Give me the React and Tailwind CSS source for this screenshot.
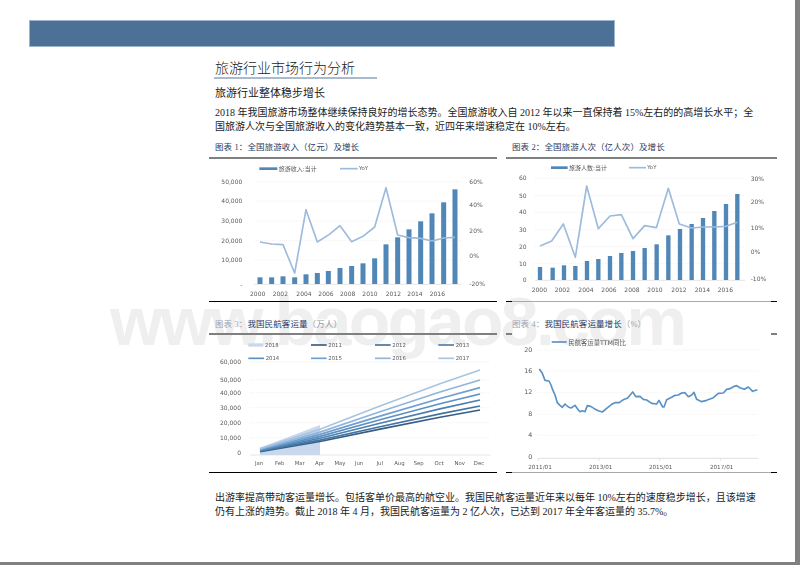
import React from 'react'

const chartFont = "font-['DejaVu_Sans','Noto_Sans_CJK_SC',sans-serif]"
const blue = '#5087b7'
const light = '#9dbbdc'

// chart coordinates below are 3x page pixels, the viewBox scales them down
const toPoints = (pts) => pts.map((p) => p.join(',')).join(' ')

const Grid = ({ x1, x2, ys }) =>
    ys.map((y) => <line key={y} x1={x1} x2={x2} y1={y} y2={y} stroke="#ececec" strokeWidth="2" strokeDasharray="3 3" />)

const Labels = ({ items, x, anchor = 'end', size = 18 }) =>
    items.map(([label, y]) => (
        <text key={label} x={x} y={y + 6} fontSize={size} textAnchor={anchor} fill="#595959">{label}</text>
    ))

const XLabels = ({ items, y, size = 18 }) =>
    items.map(([label, x]) => (
        <text key={label} x={x} y={y + 6} fontSize={size} textAnchor="middle" fill="#595959">{label}</text>
    ))

const BarsChart = ({ box, bars, line, base, barW, grid, left, leftX, right, rightX, xs, xsY, legend }) => (
    <svg viewBox={`${box[0]} 75 ${box[1]} 420`} className={`block w-full h-[140px] mt-px blur-[0.3px] ${chartFont}`}>
        <Grid x1={grid[0]} x2={grid[1]} ys={grid[2]} />
        <line x1={grid[0]} x2={grid[1]} y1={base + 1} y2={base + 1} stroke="#d9d9d9" strokeWidth="2" />
        {bars.map(([x, top]) => <rect key={x} x={x - barW / 2} y={top} width={barW} height={base - top} fill={blue} />)}
        <polyline points={toPoints(line)} fill="none" stroke={light} strokeWidth="5" strokeLinejoin="round" />
        <Labels items={left} x={leftX} />
        <Labels items={right} x={rightX} anchor="start" />
        <XLabels items={xs} y={xsY} />
        <rect x={legend.rect[0]} y={legend.y - 4} width={legend.rect[1]} height="8" fill={blue} />
        <text x={legend.rect[0] + legend.rect[1] + 4} y={legend.y + 6} fontSize="18" fill="#595959">{legend.name}</text>
        <line x1={legend.line[0]} x2={legend.line[0] + legend.line[1]} y1={legend.y} y2={legend.y} stroke={light} strokeWidth="5" />
        <text x={legend.line[0] + legend.line[1] + 4} y={legend.y + 5} fontSize="16" fill="#595959">YoY</text>
    </svg>
)

const chart1 = {
    box: [12, 864],
    base: 447,
    barW: 15,
    bars: [[165, 427], [200, 427], [234, 424], [269, 427], [303, 418], [337, 414], [370, 408], [405, 399], [440, 393], [474, 385], [509, 370], [543, 328], [578, 307], [612, 283], [647, 259], [681, 235], [716, 202], [750, 163]],
    line: [[165, 321], [200, 327], [234, 329], [269, 414], [303, 224], [337, 321], [372, 299], [405, 272], [440, 320], [474, 304], [509, 276], [543, 158], [578, 300], [612, 308], [647, 310], [681, 318], [716, 309], [750, 307]],
    grid: [147, 770, [140, 198, 258, 317, 375]],
    left: [['50,000', 140], ['40,000', 198], ['30,000', 258], ['20,000', 317], ['10,000', 375], ['-', 449]],
    leftX: 112,
    right: [['60%', 141], ['40%', 210], ['20%', 287], ['0%', 362], ['-20%', 447]],
    rightX: 793,
    xs: [['2000', 158], ['2002', 226], ['2004', 297], ['2006', 363], ['2008', 428], ['2010', 495], ['2012', 565], ['2014', 630], ['2016', 697]],
    xsY: 476,
    legend: { y: 101, rect: [163, 54], name: '旅游收入:当计', line: [405, 53] },
}

const chart2 = {
    box: [18, 813],
    base: 435,
    barW: 13,
    bars: [[120, 396], [158, 398], [192, 391], [226, 393], [261, 378], [295, 372], [330, 363], [364, 354], [399, 348], [434, 339], [470, 328], [505, 301], [540, 282], [575, 267], [609, 249], [643, 228], [678, 207], [712, 177]],
    line: [[120, 333], [155, 318], [190, 267], [226, 367], [260, 153], [295, 281], [330, 243], [364, 239], [399, 311], [434, 272], [469, 278], [505, 160], [538, 267], [575, 279], [609, 276], [643, 276], [678, 274], [712, 262]],
    grid: [105, 735, [130, 182, 232, 284, 335, 386]],
    left: [['60', 130], ['50', 182], ['40', 232], ['30', 284], ['20', 335], ['10', 386], ['0', 435]],
    leftX: 80,
    right: [['30%', 131], ['20%', 200], ['10%', 278], ['0%', 352], ['-10%', 433]],
    rightX: 752,
    xs: [['2000', 118], ['2002', 187], ['2004', 258], ['2006', 327], ['2008', 396], ['2010', 465], ['2012', 537], ['2014', 607], ['2016', 676]],
    xsY: 464,
    legend: { y: 98, rect: [153, 50], name: '旅游人数:当计', line: [387, 51] },
}

const series = [
    ['2011', '#355d87', 345, 318, 150],
    ['2012', '#44739f', 333, 510, 150],
    ['2013', '#4c7fae', 315, 700, 150],
    ['2014', '#5b90c3', 297, 130, 190],
    ['2015', '#6e9fd0', 278, 318, 190],
    ['2016', '#90b4da', 255, 510, 190],
    ['2017', '#a9c4e0', 225, 700, 190],
]
const stops = [[165, 0], [345, 0.245], [525, 0.54], [705, 0.825], [825, 1]]
const months = [['Jan', 162], ['Feb', 224], ['Mar', 284], ['Apr', 344], ['May', 405], ['Jun', 462], ['Jul', 524], ['Aug', 583], ['Sep', 641], ['Oct', 702], ['Nov', 764], ['Dec', 822]]

const MonthlyChart = () => (
    <svg viewBox="12 123 864 402" className={`block w-full h-[134px] mt-px blur-[0.3px] ${chartFont}`}>
        <Grid x1={135} x2={855} ys={[200, 254, 293, 338, 383, 428]} />
        <line x1="135" x2="855" y1="480" y2="480" stroke="#d9d9d9" strokeWidth="2" />
        <polygon points="165,480 165,458 345,390 345,480" fill="#c9d8ec" />
        {series.map(([name, color, end], i) => {
            const start = 470 - i * 1.6
            return <polyline key={name} points={toPoints(stops.map(([x, t]) => [x, start - (start - end) * t]))} fill="none" stroke={color} strokeWidth="5" />
        })}
        <rect x="130" y="145" width="45" height="10" fill="#c9d8ec" />
        <text x="180" y="155" fontSize="16" fill="#595959">2018</text>
        {series.map(([name, color, , x, y]) => (
            <g key={name}>
                <line x1={x} x2={x + 47} y1={y} y2={y} stroke={color} strokeWidth="5" />
                <text x={x + 52} y={y + 5} fontSize="16" fill="#595959">{name}</text>
            </g>
        ))}
        <Labels items={[['60,000', 200], ['50,000', 254], ['40,000', 293], ['30,000', 338], ['20,000', 383], ['10,000', 428], ['0', 473]]} x={108} />
        <XLabels items={months} y={505} size={16} />
    </svg>
)

const ttm = [[118, 222], [127, 235], [135, 256], [147, 258], [153, 270], [158, 284], [165, 300], [172, 323], [180, 331], [187, 337], [195, 327], [205, 336], [213, 339], [225, 331], [235, 345], [240, 350], [247, 347], [255, 350], [262, 332], [272, 334], [283, 341], [295, 347], [307, 351], [320, 340], [335, 328], [345, 323], [358, 323], [370, 314], [383, 309], [398, 291], [408, 305], [420, 304], [430, 313], [440, 315], [455, 325], [470, 327], [477, 316], [488, 336], [492, 336], [500, 314], [515, 307], [525, 301], [535, 300], [545, 294], [555, 293], [565, 305], [575, 300], [582, 292], [590, 313], [605, 320], [620, 316], [640, 308], [655, 295], [670, 294], [680, 283], [690, 281], [700, 275], [710, 272], [720, 278], [733, 283], [745, 276], [758, 289], [772, 284]]

const TtmChart = () => (
    <svg viewBox="18 123 813 402" className={`block w-full h-[134px] mt-px blur-[0.3px] ${chartFont}`}>
        <Grid x1={115} x2={775} ys={[165, 228, 292, 358, 421]} />
        <line x1="115" x2="775" y1="490" y2="490" stroke="#d0d0d0" strokeWidth="2" />
        {[115, 297, 479, 661].map((x) => <line key={x} x1={x} x2={x} y1="490" y2="497" stroke="#d0d0d0" strokeWidth="2" />)}
        <polyline points={toPoints(ttm)} fill="none" stroke="#5b92c4" strokeWidth="5" strokeLinejoin="round" />
        <line x1="155" x2="200" y1="141" y2="141" stroke="#5b92c4" strokeWidth="5" />
        <text x="205" y="150" fontSize="19" fill="#595959">民航客运量TTM同比</text>
        <Labels items={[['20', 165], ['16', 228], ['12', 292], ['8', 358], ['4', 421], ['0', 486]]} x={97} size={19} />
        <XLabels items={[['2011/01', 120], ['2013/01', 302], ['2015/01', 482], ['2017/01', 665]]} y={517} size={17} />
    </svg>
)

const Caption = ({ children, top = 'pt-[2px]', rule = 'border-[#808080]' }) => (
    <div className={`h-[20px] pl-[6px] border-b-2 text-[8.5px] tracking-[0.1px] leading-[12px] text-[#1f3864] ${top} ${rule}`}>
        {children}
    </div>
)

// rule of the right column: dark only at both ends
const EndRule = ({ middle, ends, className = '' }) => (
    <div className={`flex ${className}`}>
        <div className={`w-[6px] ${ends}`}></div>
        <div className={`flex-1 ${middle}`}></div>
        <div className={`w-[6px] ${ends}`}></div>
    </div>
)

const App = () => {
    return (
        <div className="w-[800px] h-[565px] bg-[#808080] overflow-hidden">
            <div className="relative w-[795px] h-[562px] bg-white pt-5 font-['Liberation_Serif','Noto_Sans_CJK_SC',serif] text-[#1a1a1a]">
                <div className="absolute left-[110px] top-[281px] font-['Liberation_Sans',sans-serif] font-bold text-[68px] tracking-[-2.6px] leading-[80px] text-[#efefef] whitespace-nowrap">
                    www.baogao8.com
                </div>

                <div className="w-[586px] h-[27px] ml-[29px] bg-[#4d7097] border border-[#9db4cc]"></div>

                <div className="relative ml-[209px] w-[568px]">
                    <div className="w-[163px] ml-[5px] mt-[14px] h-[18px] border-b-2 border-[#a9bacd] pl-px text-[14px] leading-[16px] font-light">
                        旅游行业市场行为分析
                    </div>
                    <p className="ml-[6px] mt-[7px] text-[11px] leading-[14px]">旅游行业整体稳步增长</p>
                    <p className="ml-[6px] mt-[6px] w-[540px] text-[10px] leading-[14px]">
                        2018 年我国旅游市场整体继续保持良好的增长态势。全国旅游收入自 2012 年以来一直保持着 15%左右的的高增长水平；全国旅游人次与全国旅游收入的变化趋势基本一致，近四年来增速稳定在 10%左右。
                    </p>

                    <div className="grid grid-cols-[288px_271px] gap-x-[9px] mt-[5px]">
                        <div className="h-[163px] border-b border-black">
                            <Caption>图表 1：全国旅游收入（亿元）及增长</Caption>
                            <BarsChart {...chart1} />
                        </div>
                        <div className="h-[163px] flex flex-col justify-between">
                            <div>
                                <Caption>图表 2：全国旅游人次（亿人次）及增长</Caption>
                                <BarsChart {...chart2} />
                            </div>
                            <EndRule className="h-px" ends="bg-black" middle="bg-[#aaaaaa]" />
                        </div>
                        <div className="h-[171px] pt-[13px] border-b border-black">
                            <Caption top="pt-[3px]"><span className="text-[#9aa4b5]">图表 3：</span>我国民航客运量<span className="text-[#8c97aa]">（万人）</span></Caption>
                            <MonthlyChart />
                        </div>
                        <div className="h-[171px] pt-[13px] flex flex-col justify-between">
                            <div>
                                <Caption top="pt-[3px]" rule="border-transparent"><span className="text-[#9aa4b5]">图表 4：</span>我国民航客运量增长<span className="text-[#9aa4b5]">（%）</span></Caption>
                                <EndRule className="h-[2px] -mt-[2px]" ends="bg-[#808080]" middle="bg-transparent" />
                                <TtmChart />
                            </div>
                            <EndRule className="h-px" ends="bg-black" middle="bg-[#aaaaaa]" />
                        </div>
                    </div>

                    <p className="ml-[6px] mt-[18px] w-[545px] text-[10px] leading-[14px]">
                        出游率提高带动客运量增长。包括客单价最高的航空业。我国民航客运量近年来以每年 10%左右的速度稳步增长，且该增速仍有上涨的趋势。截止 2018 年 4 月，我国民航客运量为 2 亿人次，已达到 2017 年全年客运量的 35.7%。
                    </p>
                </div>
            </div>
        </div>
    )
}

export default App
